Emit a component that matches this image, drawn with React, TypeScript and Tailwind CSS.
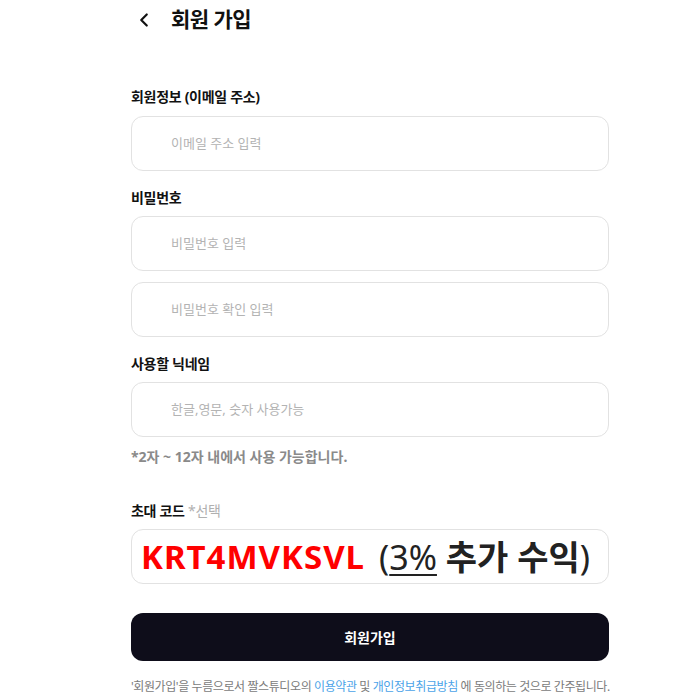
import { ChevronLeft } from "lucide-react";

const font = { fontFamily: '"Noto Sans", "Noto Sans CJK KR", sans-serif' };

function Field({ placeholder }: { placeholder: string }) {
  return (
    <div className="h-[55px] w-full rounded-xl border border-[#e2e2e2] bg-white flex items-center pl-[39px]">
      <span className="text-[13px] text-[#b3b3b3]">{placeholder}</span>
    </div>
  );
}

function Label({ children, className = "" }: { children: React.ReactNode; className?: string }) {
  return (
    <div className={`text-[14px] font-bold leading-[20px] tracking-[-0.3px] ${className}`}>{children}</div>
  );
}

export default function App() {
  return (
    <div className="min-h-screen bg-white text-[#111]" style={font}>
      <div className="ml-[131px] w-[478px]">
        {/* Header */}
        <div className="h-[40px] flex items-center">
          <ChevronLeft className="ml-[2px] w-[22px] h-[22px] text-[#111]" strokeWidth={2.4} />
          <h1 className="ml-[16px] text-[21px] font-bold tracking-tight">회원 가입</h1>
        </div>

        <div className="mt-[47px]">
          <Label className="mb-[9px]">회원정보 (이메일 주소)</Label>
          <Field placeholder="이메일 주소 입력" />
        </div>

        <div className="mt-[17px]">
          <Label className="mb-2">비밀번호</Label>
          <div className="flex flex-col gap-[11px]">
            <Field placeholder="비밀번호 입력" />
            <Field placeholder="비밀번호 확인 입력" />
          </div>
        </div>

        <div className="mt-[17px]">
          <Label className="mb-2">사용할 닉네임</Label>
          <Field placeholder="한글,영문, 숫자 사용가능" />
          <Label className="mt-[10px] text-[#8a8a8a] tracking-normal">
            *2자 ~ 12자 내에서 사용 가능합니다.
          </Label>
        </div>

        <div className="mt-[34px]">
          <div className="text-[14px] leading-[20px] mb-2 tracking-[-0.3px]">
            <span className="font-bold">초대 코드</span>{" "}
            <span className="text-[#b0b0b0]">*선택</span>
          </div>
          <div className="h-[55px] w-full rounded-xl border border-[#e2e2e2] bg-white flex items-center pl-[9px] whitespace-nowrap">
            <span className="text-[33px] font-bold text-[#ff0000] leading-none tracking-[1px]">KRT4MVKSVL</span>
            <span className="ml-[14px] text-[34px] text-[#222] leading-none">
              (<span className="underline underline-offset-4 decoration-2">3%</span>{" "}
              <span className="font-bold">추가 수익</span>)
            </span>
          </div>
        </div>

        <button className="mt-[29px] h-[48px] w-full rounded-xl bg-[#0e0d1a] text-white text-[14px] font-bold">
          회원가입
        </button>

        <p className="mt-[18px] text-[12px] leading-[16px] tracking-[-0.4px] text-[#7b7b7b] whitespace-nowrap">
          '회원가입'을 누름으로서 짤스튜디오의 <span className="text-[#4ba3e8]">이용약관</span> 및{" "}
          <span className="text-[#4ba3e8]">개인정보취급방침</span> 에 동의하는 것으로 간주됩니다.
        </p>
      </div>
    </div>
  );
}
